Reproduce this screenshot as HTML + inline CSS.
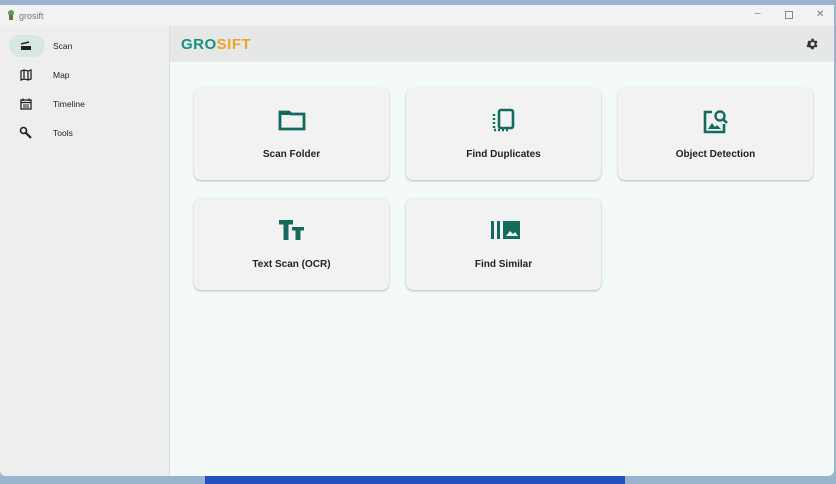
<!DOCTYPE html>
<html><head><style>
*{margin:0;padding:0;box-sizing:border-box}
body{width:836px;height:484px;overflow:hidden;background:#9ab4d0;font-family:"Liberation Sans",sans-serif;position:relative}
.desk{position:absolute;left:205px;top:476px;width:420px;height:8px;background:#2352c0}
.win{position:absolute;left:0;top:5px;width:834px;height:471px;background:#f4faf7;border-radius:0 0 6px 6px;overflow:hidden}
.title{position:absolute;left:0;top:0;width:834px;height:21px;background:#f1f3f2;font-size:9px;color:#777}
.side{position:absolute;left:0;top:21px;width:170px;height:450px;background:#edeeed;border-right:1px solid #dcdedd}
.head{position:absolute;left:170px;top:21px;width:664px;height:36px;background:#e6e8e7}
.nav{position:absolute;left:0;height:24px;width:170px;font-size:8.5px;color:#222}
.nav .pill{position:absolute;left:9px;top:0;width:36px;height:22px;border-radius:11px}
.nav span{position:absolute;left:53px;top:6px}
.nav svg{position:absolute;left:19px;top:4px}
.card{position:absolute;width:195px;height:92px;background:#f1f2f1;border-radius:7px;box-shadow:0 1px 2px rgba(0,0,0,.25);text-align:center;font-size:10px;font-weight:bold;color:#222}
.card svg{position:absolute;left:84px;top:20px}
.card span{position:absolute;left:0;right:0;top:61px}
</style></head><body>
<div class="desk"></div>
<div class="win">
<div class="title">
<svg style="position:absolute;left:7px;top:5px" width="8" height="11"><circle cx="4" cy="3" r="3" fill="#5a9a5a"/><rect x="2" y="5" width="4" height="5" fill="#7a6a3a"/></svg>
<span style="position:absolute;left:19px;top:6px">grosift</span>
<span style="position:absolute;left:755px;top:3px;font-size:10px">–</span>
<span style="position:absolute;left:785px;top:6px;width:8px;height:8px;border:1px solid #888"></span>
<span style="position:absolute;left:816px;top:4px;font-size:10px">✕</span>
</div>
<div class="side">
<div class="nav" style="top:9px"><div class="pill" style="background:#d7e8e2"></div>
<svg width="14" height="14" viewBox="0 0 14 14"><rect x="2" y="7" width="10" height="4" fill="#222"/><path d="M2 5 L10 3" stroke="#222" stroke-width="1.5"/></svg><span>Scan</span></div>
<div class="nav" style="top:38px"><svg width="14" height="14" viewBox="0 0 14 14"><path d="M2 3 L5 2 L9 3 L12 2 V11 L9 12 L5 11 L2 12Z M5 2V11 M9 3V12" fill="none" stroke="#222" stroke-width="1.3"/></svg><span>Map</span></div>
<div class="nav" style="top:67px"><svg width="14" height="14" viewBox="0 0 14 14"><rect x="2" y="3" width="10" height="9" fill="none" stroke="#222" stroke-width="1.3"/><path d="M2 5.5H12M4 1.5V4M10 1.5V4" stroke="#222" stroke-width="1.3"/><path d="M4 8H10M4 10H10" stroke="#222" stroke-width="1"/></svg><span>Timeline</span></div>
<div class="nav" style="top:96px"><svg width="14" height="14" viewBox="0 0 14 14"><circle cx="4.5" cy="4.5" r="3" fill="none" stroke="#222" stroke-width="1.6"/><path d="M6.5 6.5L12 12" stroke="#222" stroke-width="2.2"/></svg><span>Tools</span></div>
</div>
<div class="head">
<div style="position:absolute;left:11px;top:10px;font-weight:bold;font-size:15px;letter-spacing:0.5px"><span style="color:#1a8e7f">GRO</span><span style="color:#f2a12e">SIFT</span></div>
<svg style="position:absolute;left:635px;top:11px" width="14" height="14" viewBox="0 0 24 24"><path fill="#333" d="M19.4 13a7.5 7.5 0 000-2l2.1-1.6-2-3.5-2.5 1a7 7 0 00-1.7-1L15 3h-4l-.4 2.9a7 7 0 00-1.7 1l-2.5-1-2 3.5L4.6 11a7.5 7.5 0 000 2l-2.1 1.6 2 3.5 2.5-1a7 7 0 001.7 1L11 21h4l.4-2.9a7 7 0 001.7-1l2.5 1 2-3.5zM13 15.5a3.5 3.5 0 110-7 3.5 3.5 0 010 7z"/></svg>
</div>
<div class="card" style="left:194px;top:83px"><svg width="28" height="24" viewBox="0 0 28 24"><path d="M2 4H11L13 6H26V21H2Z" fill="none" stroke="#136b5e" stroke-width="2.8"/><path d="M2 4H11L13 7H2Z" fill="#136b5e"/></svg><span>Scan Folder</span></div>
<div class="card" style="left:406px;top:83px"><svg width="28" height="26" viewBox="0 0 28 26"><rect x="9" y="2" width="14" height="18" rx="2" fill="none" stroke="#136b5e" stroke-width="2.6"/><path d="M4 6V22H19" fill="none" stroke="#136b5e" stroke-width="2.4" stroke-dasharray="2 2"/></svg><span>Find Duplicates</span></div>
<div class="card" style="left:618px;top:83px"><svg width="28" height="26" viewBox="0 0 28 26"><path d="M10 4H3V24H22V16" fill="none" stroke="#136b5e" stroke-width="2.6"/><circle cx="18" cy="8" r="4.5" fill="none" stroke="#136b5e" stroke-width="2.4"/><path d="M21 11L25 15" stroke="#136b5e" stroke-width="2.6"/><path d="M6 21L10 15L13 19L15 17L19 21Z" fill="#136b5e"/></svg><span>Object Detection</span></div>
<div class="card" style="left:194px;top:193px"><svg width="28" height="24" viewBox="0 0 28 24"><path d="M1 2H15V6.5H10.5V22H5.5V6.5H1Z M14 9H26V12.5H22.5V22H17.5V12.5H14Z" fill="#136b5e"/></svg><span>Text Scan (OCR)</span></div>
<div class="card" style="left:406px;top:193px"><svg width="32" height="24" viewBox="0 0 32 24"><rect x="1" y="3" width="3" height="18" fill="#136b5e"/><rect x="7" y="3" width="3" height="18" fill="#136b5e"/><rect x="13" y="3" width="17" height="18" fill="#136b5e"/><path d="M16 18L20 13L23 16L25 14L28 18Z" fill="#f1f2f1"/></svg><span>Find Similar</span></div>
</div>
</body></html>
